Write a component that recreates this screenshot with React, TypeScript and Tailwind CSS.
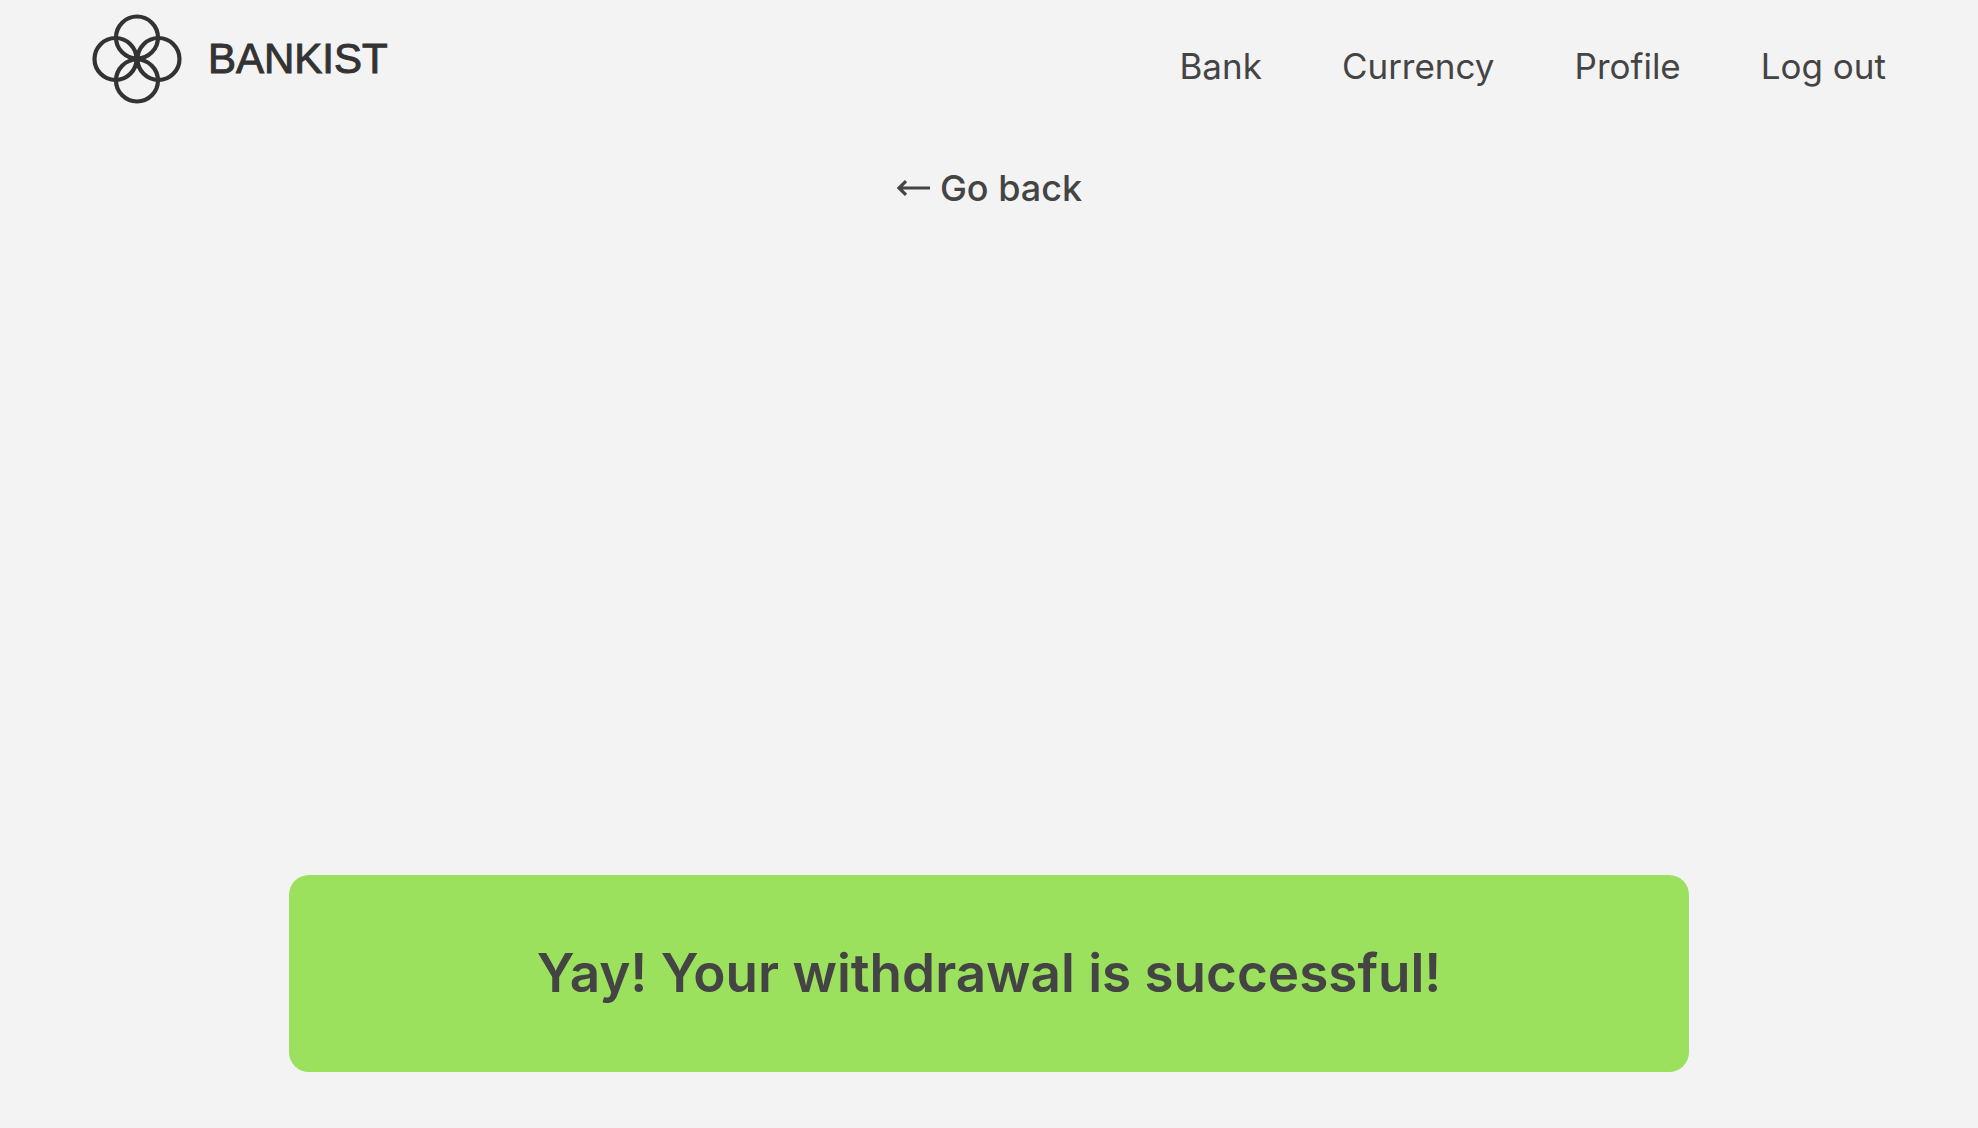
const links = ["Bank", "Currency", "Profile", "Log out"];

function Logo() {
  return (
    <a href="#" className="flex items-center gap-6 text-[#333333]">
      <svg className="size-[92px]" viewBox="0 0 92 92" fill="none" stroke="currentColor" strokeWidth="4.2" aria-hidden="true">
        <circle cx="46" cy="24.5" r="21" />
        <circle cx="67.5" cy="46" r="21" />
        <circle cx="46" cy="67.5" r="21" />
        <circle cx="24.5" cy="46" r="21" />
      </svg>
      <span className="pl-px font-['Liberation_Sans',Arial,sans-serif] text-[42px] leading-none [-webkit-text-stroke:1px_currentColor]">
        BANKIST
      </span>
    </a>
  );
}

function BackArrow() {
  return (
    <svg className="h-5 w-9" viewBox="0 0 36 20" fill="none" stroke="currentColor" strokeWidth="3.2" aria-hidden="true">
      <path d="M34 10H3M10 3.2 3 10l7 6.8" />
    </svg>
  );
}

export default function App() {
  return (
    <div className="flex min-h-screen flex-col bg-[#f3f3f3] font-['Inter',sans-serif] text-[#444444]">
      <header className="flex items-start justify-between pt-[13px] pr-23 pl-[91px]">
        <Logo />
        <nav className="pt-7">
          <ul className="flex gap-20 text-[35px] leading-[50px]">
            {links.map((label) => (
              <li key={label}>
                <a href="#">{label}</a>
              </li>
            ))}
          </ul>
        </nav>
      </header>

      <div className="mt-14 flex justify-center">
        <button type="button" className="flex items-center gap-2 text-[36px] leading-[54px] font-medium">
          <BackArrow />
          Go back
        </button>
      </div>

      <main className="mt-auto px-8 pb-14">
        <div role="status" className="mx-auto max-w-[1400px] rounded-[20px] bg-[#9be15d] px-8 py-15 text-center">
          <h1 className="text-[53px] leading-[77px] font-semibold">Yay! Your withdrawal is successful!</h1>
        </div>
      </main>
    </div>
  );
}
